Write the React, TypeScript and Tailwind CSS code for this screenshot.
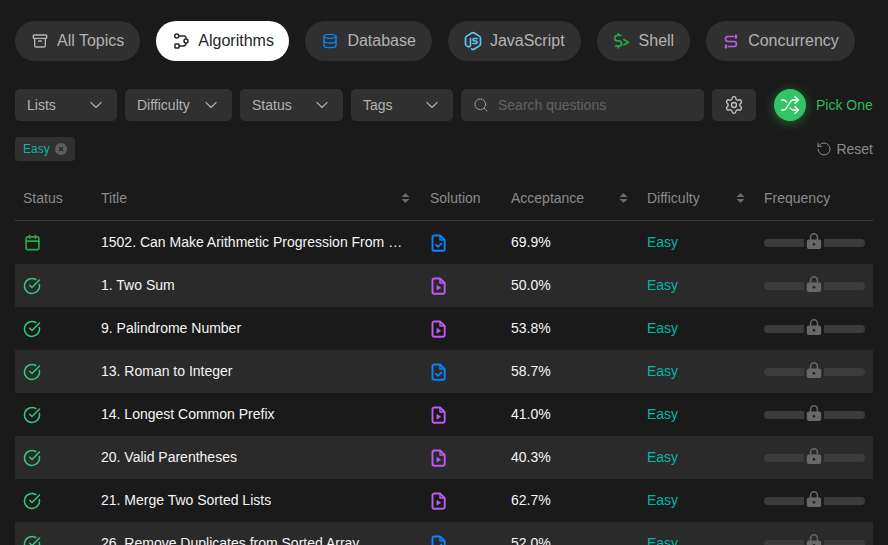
import { Archive, Calendar, ChevronDown, CircleCheckBig, Database, RotateCcw, Search, Settings, Shuffle } from "lucide-react";
import { TbBrandNodejs } from "react-icons/tb";

const font = { fontFamily: '"Liberation Sans", Arial, sans-serif' };

// Custom icons for things lucide has no close match for
function RouteIcon() {
  return (
    <svg width="16" height="16" viewBox="0 0 16 16" fill="none" stroke="currentColor" strokeWidth="1.5" strokeLinejoin="round">
      <circle cx="3.7" cy="3" r="2" />
      <circle cx="13" cy="8" r="2" />
      <rect x="2" y="11" width="4" height="4" rx="0.6" />
      <path d="M5.7 3h5a2.3 2.3 0 0 1 2.3 3M13 10a3 3 0 0 1-3 3H6" />
    </svg>
  );
}

function ShellIcon() {
  return (
    <svg width="16" height="16" viewBox="0 0 16 16" fill="none" stroke="currentColor" strokeWidth="1.8" strokeLinejoin="round" className="overflow-visible">
      <path d="M7.6 2.4H3.4a2.3 2.3 0 0 0 0 5.4h1.4a2.3 2.3 0 0 1 0 5.4H1M4.3 0v2.4M4.3 13.2v2.3" />
      <path d="m9.2 6.3 5.3 3-5.3 3" />
    </svg>
  );
}

function ConcurrencyIcon() {
  return (
    <svg width="16" height="16" viewBox="0 0 16 16" fill="none" stroke="currentColor" strokeWidth="1.5" strokeLinecap="round" strokeLinejoin="round">
      <path d="M10.5 3.5H5a2.5 2.5 0 0 0 0 5h6a2.5 2.5 0 0 1 0 5H5.5" />
      <path d="M13 2.6v1.8M3 12.6v1.8" strokeWidth="2.4" />
    </svg>
  );
}

function SolutionIcon({ kind }: { kind: "check" | "play" }) {
  const color = kind === "check" ? "text-[#0a84ff]" : "text-[#bf5af2]";
  return (
    <svg width="16" height="18" viewBox="0 0 16 18" fill="none" stroke="currentColor" strokeWidth="1.9" strokeLinejoin="round" className={`ml-[1px] ${color}`}>
      <path d="M3.2 1.5h5.8l4.7 4.5v9a1.8 1.8 0 0 1-1.8 1.8H3.2A1.8 1.8 0 0 1 1.5 15V3.2A1.7 1.7 0 0 1 3.2 1.5Z" />
      <path d="M9 1.5V6h4.7" strokeWidth="1.5" />
      {kind === "check" ? (
        <path d="m5 10.8 2 2 3.5-3.5" strokeLinecap="round" strokeWidth="1.7" />
      ) : (
        <path d="M6 8.5v4.5l3.6-2.2Z" fill="currentColor" strokeWidth="0.8" />
      )}
    </svg>
  );
}

function LockIcon() {
  return (
    <svg width="16" height="16" viewBox="0 0 16 16" className="text-[#686868]">
      <path d="M4.6 7V4.2a3.4 3.4 0 0 1 6.8 0V7" fill="none" stroke="currentColor" strokeWidth="1.5" />
      <rect x="0.8" y="6.5" width="14.4" height="9.5" rx="2" fill="currentColor" />
      <circle cx="8" cy="11.2" r="1.3" fill="#1f1f1f" />
    </svg>
  );
}

function SortIcon() {
  return (
    <svg width="9" height="12" viewBox="0 0 9 12" fill="#6b6b6b">
      <path d="M4.5 1 8.5 5H.5ZM4.5 11 .5 7h8Z" />
    </svg>
  );
}

const topics = [
  { label: "All Topics", icon: <Archive size={16} strokeWidth={2} className="text-[#b3b3b3]" /> },
  { label: "Algorithms", icon: <RouteIcon />, active: true },
  { label: "Database", icon: <Database size={16} strokeWidth={2} className="text-[#0a84ff]" /> },
  { label: "JavaScript", icon: <TbBrandNodejs size={20} className="-mx-[2px] text-[#5ac8fa]" /> },
  { label: "Shell", icon: <span className="text-[#28a745]"><ShellIcon /></span> },
  { label: "Concurrency", icon: <span className="text-[#bf5af2]"><ConcurrencyIcon /></span> },
];

const filters = [
  { label: "Lists", width: "w-[102px]" },
  { label: "Difficulty", width: "w-[107px]" },
  { label: "Status", width: "w-[103px]" },
  { label: "Tags", width: "w-[102px]" },
];

const rows: { title: string; solution: "check" | "play"; acceptance: string; daily?: boolean }[] = [
  { title: "1502. Can Make Arithmetic Progression From Sequence", solution: "check", acceptance: "69.9%", daily: true },
  { title: "1. Two Sum", solution: "play", acceptance: "50.0%" },
  { title: "9. Palindrome Number", solution: "play", acceptance: "53.8%" },
  { title: "13. Roman to Integer", solution: "check", acceptance: "58.7%" },
  { title: "14. Longest Common Prefix", solution: "play", acceptance: "41.0%" },
  { title: "20. Valid Parentheses", solution: "play", acceptance: "40.3%" },
  { title: "21. Merge Two Sorted Lists", solution: "play", acceptance: "62.7%" },
  { title: "26. Remove Duplicates from Sorted Array", solution: "check", acceptance: "52.0%" },
];

const gridCols = "grid grid-cols-[78px_329px_81px_136px_117px_117px] items-center";

export default function App() {
  return (
    <div className="h-[545px] w-[888px] overflow-hidden bg-[#1a1a1a] px-[15px] pt-[21px]" style={font}>
      {/* Topics */}
      <div className="flex gap-4">
        {topics.map((t) => (
          <div
            key={t.label}
            className={`flex h-10 items-center gap-[9px] rounded-full pl-[17px] text-base ${
              t.active ? "bg-white pr-[15.5px] text-[#26262c]" : "bg-[#303030] pr-4 text-[#b3b3b3]"
            }`}
          >
            {t.icon}
            <span>{t.label}</span>
          </div>
        ))}
      </div>

      {/* Filters */}
      <div className="mt-7 flex h-8 items-center">
        <div className="flex gap-2">
          {filters.map((f) => (
            <div key={f.label} className={`flex h-8 items-center justify-between rounded-[5px] bg-[#303030] pl-3 pr-[11px] text-sm text-[#b3b3b3] ${f.width}`}>
              <span>{f.label}</span>
              <ChevronDown size={20} strokeWidth={1.5} className="text-[#a8a8a8]" />
            </div>
          ))}
          <div className="flex h-8 w-[243px] items-center gap-[9px] rounded-[5px] bg-[#303030] px-3 text-sm text-[#636363]">
            <Search size={16} strokeWidth={1.5} className="text-[#9a9a9a]" />
            <span>Search questions</span>
          </div>
          <div className="flex h-8 w-11 items-center justify-center rounded-[5px] bg-[#303030]">
            <Settings size={20} strokeWidth={1.6} className="text-[#c4c4c4]" />
          </div>
        </div>
        <div className="ml-[18px] flex size-8 items-center justify-center rounded-full bg-[#34c465] shadow-[0_2px_12px_rgba(52,199,89,0.45)]">
          <Shuffle size={20} strokeWidth={1.6} className="text-white" />
        </div>
        <span className="ml-2.5 text-sm text-[#2cbb5d]">Pick One</span>
      </div>

      {/* Active tag + reset */}
      <div className="mt-4 flex h-6 items-center justify-between">
        <div className="flex h-6 w-[60px] items-center gap-[5px] rounded-[4px] bg-[#303030] pl-2 text-xs text-[#00b8a3]">
          <span>Easy</span>
          <span className="flex size-3 items-center justify-center rounded-full bg-[#5e5e5e] text-[#262626]">
            <svg width="6" height="6" viewBox="0 0 6 6" stroke="currentColor" strokeWidth="1.3"><path d="m1 1 4 4M5 1 1 5" /></svg>
          </span>
        </div>
        <div className="flex items-center gap-1 text-sm text-[#8a8a8a]">
          <RotateCcw size={16} strokeWidth={1.5} />
          <span>Reset</span>
        </div>
      </div>

      {/* Table */}
      <div className="mt-[15px] text-sm">
        <div className={`${gridCols} h-[45px] border-b border-[#3d3d3d] text-[#8a8a8a]`}>
          <div className="px-2">Status</div>
          <div className="flex items-center justify-between px-2 pr-3"><span>Title</span><SortIcon /></div>
          <div className="px-2">Solution</div>
          <div className="flex items-center justify-between pl-2 pr-[11px]"><span>Acceptance</span><SortIcon /></div>
          <div className="flex items-center justify-between pl-2 pr-[11px]"><span>Difficulty</span><SortIcon /></div>
          <div className="px-2">Frequency</div>
        </div>
        {rows.map((r, i) => (
          <div key={r.title} className={`${gridCols} h-[43px] ${i % 2 === 1 ? "bg-[#2a2a2a]" : ""}`}>
            <div className="px-2">
              {r.daily ? (
                <Calendar size={17} strokeWidth={2.4} className="ml-[1px] text-[#28a745]" />
              ) : (
                <CircleCheckBig size={18} strokeWidth={2} className="text-[#34c77f]" />
              )}
            </div>
            <div className="truncate pb-[2px] pl-2 pr-[18px] text-[#f5f5f5]">{r.title}</div>
            <div className="flex px-2"><SolutionIcon kind={r.solution} /></div>
            <div className="px-2 pb-[2px] text-[#f5f5f5]">{r.acceptance}</div>
            <div className="px-2 pb-[2px] text-[#00b8a3]">Easy</div>
            <div className="px-2">
              <div className="relative flex w-[101px] justify-between">
                <div className="h-2 w-10 rounded-l-full bg-[#3b3b3b]" />
                <div className="h-2 w-[41px] rounded-r-full bg-[#3b3b3b]" />
                <div className="absolute -top-[6px] left-[42px]">
                  <LockIcon />
                </div>
              </div>
            </div>
          </div>
        ))}
      </div>
    </div>
  );
}
